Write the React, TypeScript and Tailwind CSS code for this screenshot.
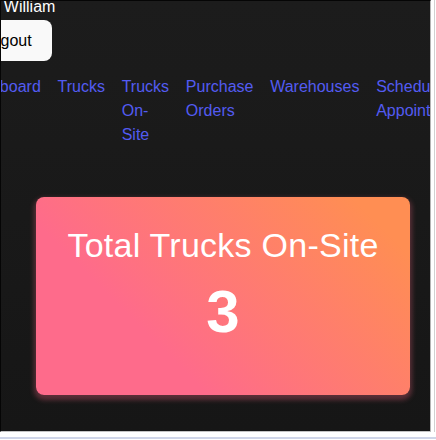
import React from "react";

const links = ["Dashboard", "Trucks", "Trucks On-Site", "Purchase Orders", "Warehouses", "Schedule Appointment"];

export default function App() {
  return (
    <div className="flex h-[440px] w-[436px] flex-col overflow-hidden bg-white font-['Liberation_Sans',Arial,sans-serif]">
      <div className="flex h-[432px] shrink-0">
        <div className="h-[432px] w-[431px] shrink-0 overflow-hidden border-l border-t border-b border-r border-l-[#050505] border-t-[#050505] border-r-[#b4b4b4] border-b-[#c4c4c4] bg-[linear-gradient(180deg,#1c1c1c,#161616)]">
          <div className="ml-[-38.5px] w-[520px] text-[16px] leading-6">
            <div className="ml-[-4px] mt-[-6px] text-white">Hello, William</div>
            <button className="mt-px flex h-[41px] items-center rounded-lg border border-transparent bg-[#f9f9f9] pl-[19.2px] pr-[19.7px] text-[16px] text-black">
              Logout
            </button>
            <ul className="mt-[14px] flex gap-[16.75px]">
              {links.map((l) => (
                <li key={l} className="w-min">
                  <a className="text-[#535bf2]">{l}</a>
                </li>
              ))}
            </ul>
          </div>
          <div className="ml-[35px] mt-[50px] flex h-[198px] w-[374px] flex-col items-center rounded-lg bg-[linear-gradient(45deg,#FE6B8B_30%,#FF8E53_90%)] pt-[27px] text-white shadow-[0_3px_5px_2px_rgba(255,105,135,0.3)]">
            <div className="mb-[10px] text-[34px] leading-[42px] tracking-[0.25px]">Total Trucks On-Site</div>
            <div className="text-[60px] font-bold leading-[72px]">3</div>
          </div>
        </div>
        <div className="w-[3px]" />
        <div className="w-px bg-[#d0d0d0]" />
      </div>
      <div className="h-[5px] shrink-0" />
      <div className="h-[2px] shrink-0 bg-[#cfd5e8]" />
    </div>
  );
}
